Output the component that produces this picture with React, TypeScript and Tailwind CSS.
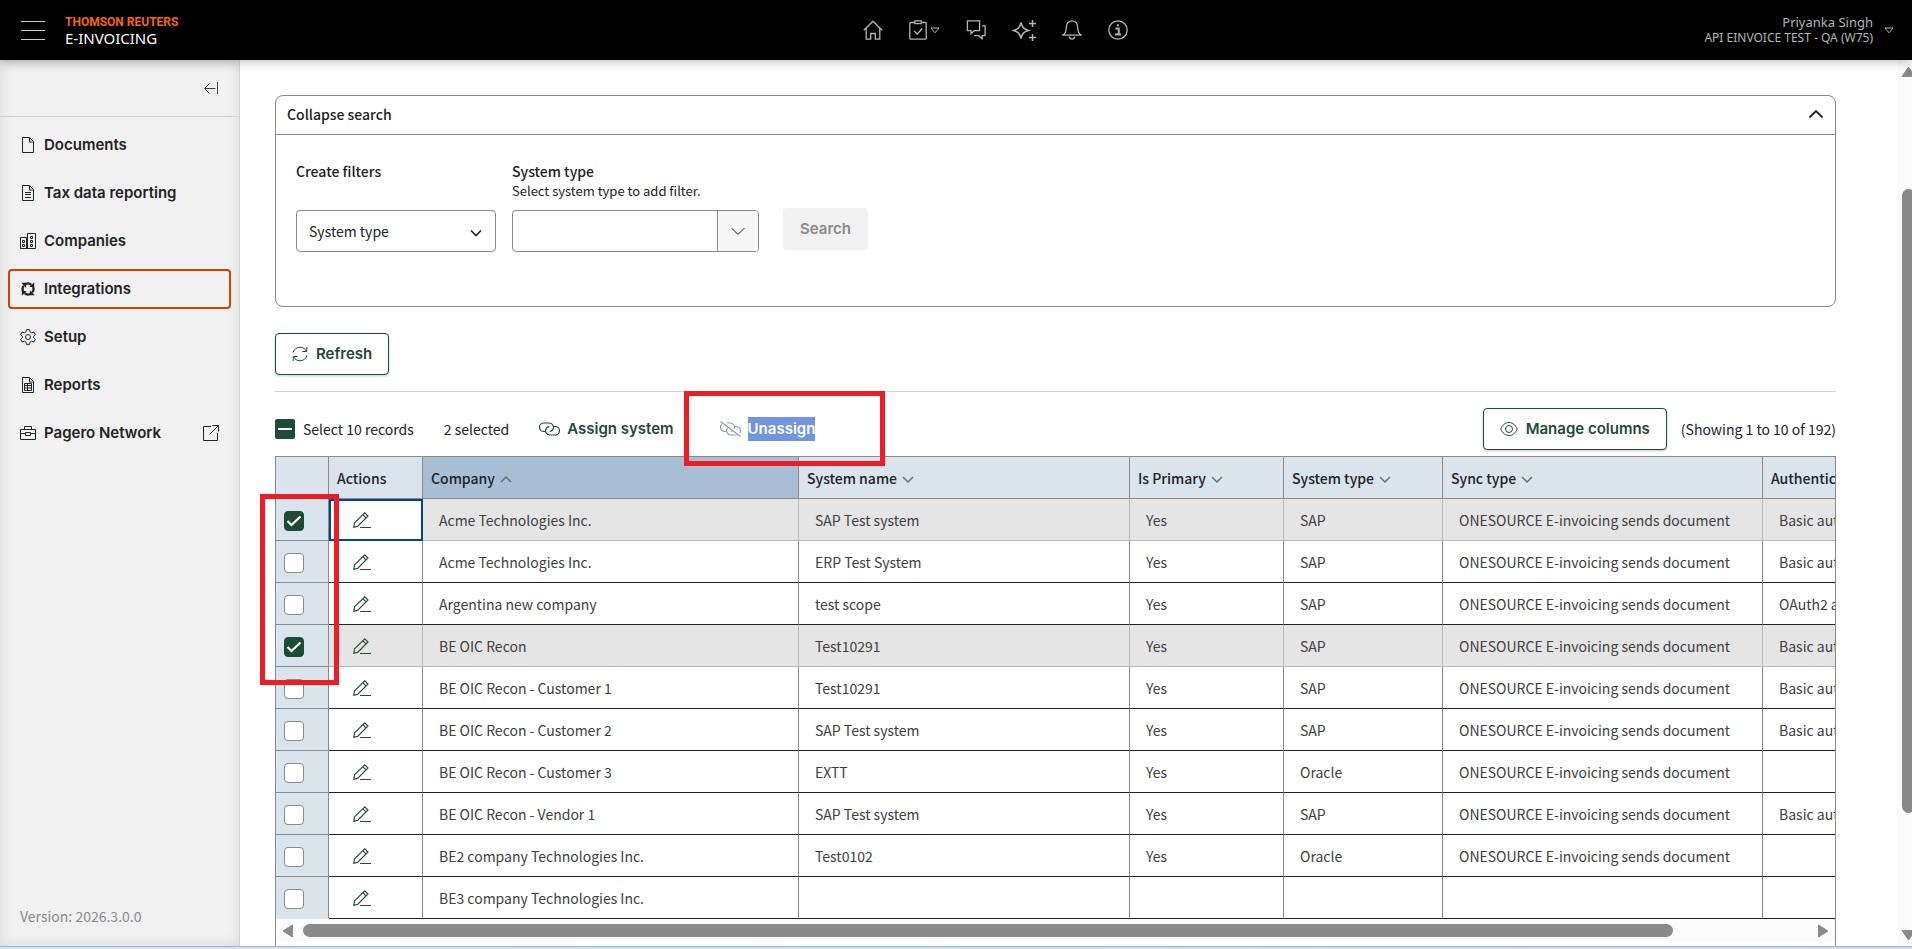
import type { ReactNode } from "react";
import { clsx } from "clsx";

type Row = {
  company: string;
  system: string;
  primary: string;
  type: string;
  sync: string;
  auth: string;
  selected?: boolean;
};

const SYNC = "ONESOURCE E-invoicing sends document";

const rows: Row[] = [
  { company: "Acme Technologies Inc.", system: "SAP Test system", primary: "Yes", type: "SAP", sync: SYNC, auth: "Basic authentication", selected: true },
  { company: "Acme Technologies Inc.", system: "ERP Test System", primary: "Yes", type: "SAP", sync: SYNC, auth: "Basic authentication" },
  { company: "Argentina new company", system: "test scope", primary: "Yes", type: "SAP", sync: SYNC, auth: "OAuth2 authentication" },
  { company: "BE OIC Recon", system: "Test10291", primary: "Yes", type: "SAP", sync: SYNC, auth: "Basic authentication", selected: true },
  { company: "BE OIC Recon - Customer 1", system: "Test10291", primary: "Yes", type: "SAP", sync: SYNC, auth: "Basic authentication" },
  { company: "BE OIC Recon - Customer 2", system: "SAP Test system", primary: "Yes", type: "SAP", sync: SYNC, auth: "Basic authentication" },
  { company: "BE OIC Recon - Customer 3", system: "EXTT", primary: "Yes", type: "Oracle", sync: SYNC, auth: "" },
  { company: "BE OIC Recon - Vendor 1", system: "SAP Test system", primary: "Yes", type: "SAP", sync: SYNC, auth: "Basic authentication" },
  { company: "BE2 company Technologies Inc.", system: "Test0102", primary: "Yes", type: "Oracle", sync: SYNC, auth: "" },
  { company: "BE3 company Technologies Inc.", system: "", primary: "", type: "", sync: "", auth: "" },
];

const columns = ["System name", "Is Primary", "System type", "Sync type", "Authentication type"];

function Icon({ size = 16, w, h, className, children }: { size?: number; w?: number; h?: number; className?: string; children: ReactNode }) {
  const width = w ?? size;
  const height = h ?? size;
  return (
    <svg
      width={width}
      height={height}
      viewBox={`0 0 ${width} ${height}`}
      fill="none"
      stroke="currentColor"
      strokeWidth="1"
      aria-hidden="true"
      className={clsx("shrink-0", className)}
    >
      {children}
    </svg>
  );
}

const DocumentIcon = () => (
  <Icon>
    <path d="M2.5.5h7l4 4v11h-11zM9.5.5v4.500h4" />
  </Icon>
);

const TaxIcon = () => (
  <Icon>
    <path d="M2.5.5h7l4 4v11h-11zM9.5.5v4.500h4M5 7.500h6M5 9.500h6M5 12.500h6" />
  </Icon>
);

const CompaniesIcon = () => (
  <Icon>
    <path d="M.5 15.500v-11h6v11zM.5 15.500h15v-15h-8v15M10.500 3.500h2v2h-2zM10.500 7.500h2v2h-2zM10.500 11.500h2v2h-2zM2.500 7.500h2v2h-2zM2.500 11.500h2v2h-2z" />
  </Icon>
);

const IntegrationsIcon = () => (
  <Icon>
    {[0, 90, 180, 270].map((angle) => (
      <g key={angle} transform={`rotate(${angle} 8 8)`}>
        <path strokeWidth="2.200" d="M5.800 2.900c2-.8 4-.5 5.600.9" />
        <path fill="currentColor" stroke="none" d="M14.200 1.200v4.900H9.300z" />
      </g>
    ))}
  </Icon>
);

const SetupIcon = () => (
  <Icon>
    <path d="M6.500.6h3l.5 2.300 1.500.9 2.300-.8 1.500 2.600L13.600 7.200v1.600l1.700 1.600-1.500 2.600-2.300-.8-1.500.9-.5 2.300h-3L6 13.100l-1.500-.9-2.300.8L.7 10.400l1.700-1.600V7.200L.7 5.600 2.200 3l2.300.8L6 2.900z" />
    <circle cx="8" cy="8" r="2.500" />
  </Icon>
);

const ReportsIcon = () => (
  <Icon>
    <path d="M2.500.5h7l4 4v11h-11zM9.500.5v4.500h4M4.500 6.500h7v7h-7zM4.500 8.500h7M4.500 11h7M7.500 6.500v7" />
  </Icon>
);

const NetworkIcon = () => (
  <Icon>
    <path d="M.5 4.500h15v10H.5zM4.500 4.500v-3h7v3M.5 8.500h5M10.500 8.500h5M5.500 7.500h5v3h-5z" />
  </Icon>
);

const ExternalIcon = () => (
  <Icon className="ml-auto">
    <path d="M8 1.500H.5v14h14V8M9.500.5h6v6M15.500.5l-9 9" />
  </Icon>
);

const nav = [
  { label: "Documents", icon: <DocumentIcon /> },
  { label: "Tax data reporting", icon: <TaxIcon /> },
  { label: "Companies", icon: <CompaniesIcon /> },
  { label: "Integrations", icon: <IntegrationsIcon />, active: true },
  { label: "Setup", icon: <SetupIcon /> },
  { label: "Reports", icon: <ReportsIcon /> },
  { label: "Pagero Network", icon: <NetworkIcon />, external: true },
];

const Caret = () => (
  <Icon w={10} h={7}>
    <path d="M1 1h8L5 5.800z" />
  </Icon>
);

function TopBar() {
  return (
    <header className="relative z-10 flex h-[60px] shrink-0 items-center bg-black pr-[18px] pl-[21px] font-['Noto_Sans',sans-serif] text-[#b4b4b4] shadow-[0_2px_10px_rgba(0,0,0,0.25)]">
      <button type="button" aria-label="Menu" className="flex w-6 flex-col gap-2">
        <span className="h-px w-full bg-[#d0d0d0]" />
        <span className="h-px w-full bg-[#d0d0d0]" />
        <span className="h-px w-full bg-[#d0d0d0]" />
      </button>
      <div className="ml-5 leading-4">
        <p className="font-['Roboto',sans-serif] text-xs leading-4 font-bold text-[#fa6400]">THOMSON REUTERS</p>
        <p className="text-[15px] leading-4 text-white">E-INVOICING</p>
      </div>
      <nav className="flex flex-1 items-center justify-center gap-[26px] pl-[108px]">
        <button type="button" aria-label="Home">
          <Icon size={20}>
            <path strokeWidth="1.300" d="M.8 10.200 10 1.200l9.200 9M3.200 8v11.200h4.500v-5.700h4.600v5.700h4.500V8" />
          </Icon>
        </button>
        <button type="button" aria-label="Tasks" className="flex items-center gap-[3px]">
          <Icon w={18} h={20}>
            <path strokeWidth="1.300" d="M5 2.500H1.600A.8.800 0 0 0 .8 3.300v15.100a.8.800 0 0 0 .8.800h14.800a.8.800 0 0 0 .8-.8V3.300a.8.800 0 0 0-.8-.8H13M5.800.9h6.400v2.700H5.800zM5.200 11l3 3 5-5.500" />
          </Icon>
          <Caret />
        </button>
        <button type="button" aria-label="Messages">
          <Icon size={20}>
            <path strokeWidth="1.300" d="M1.400.9h12.200v9.800H8.200L5 13.800v-3.100H1.400zM16 5.900h3.100v9.800h-3v3.200l-3.400-3.200H8.200" />
          </Icon>
        </button>
        <button type="button" aria-label="Assistant">
          <Icon w={24} h={21}>
            <path strokeWidth="1.500" d="M9 2.500c1.200 5 2.800 6.700 7.500 8-4.700 1.300-6.300 3-7.500 8-1.200-5-2.800-6.700-7.500-8 4.700-1.300 6.300-3 7.500-8zM20.500 0v7M17 3.500h7M20.500 14v7M17 17.500h7" />
          </Icon>
        </button>
        <button type="button" aria-label="Notifications">
          <Icon size={20}>
            <path strokeWidth="1.300" d="M.9 15.100c3.500-2.500 3.300-4.700 3.500-8C4.600 3.200 7 .9 10 .9s5.400 2.300 5.600 6.200c.2 3.300 0 5.500 3.500 8zM7.300 16.700c.2 1.600 1.300 2.400 2.700 2.400s2.500-.8 2.700-2.400" />
          </Icon>
        </button>
        <button type="button" aria-label="Information">
          <Icon size={20}>
            <circle cx="10" cy="10" r="9.200" strokeWidth="1.300" />
            <path strokeWidth="2" d="M7.500 8.600h3.200v5.600M7 14.400h6.200M9 5.200h2" />
          </Icon>
        </button>
      </nav>
      <button type="button" className="flex items-center gap-[11px] text-right">
        <span>
          <span className="block text-[13px] leading-4">Priyanka Singh</span>
          <span className="block text-xs leading-4">API EINVOICE TEST - QA (W75)</span>
        </span>
        <Caret />
      </button>
    </header>
  );
}

function Sidebar() {
  return (
    <aside className="flex w-60 shrink-0 flex-col border-r border-[#d2d2d2] bg-[#f1f1f1] shadow-[inset_0_0_14px_rgba(0,0,0,0.1)]">
      <div className="flex h-[57px] shrink-0 items-center justify-end border-b border-[#d2d2d2] pr-5">
        <button type="button" aria-label="Collapse menu" className="text-[#404040]">
          <Icon w={15} h={12}>
            <path d="M1 6.500h10.500M5.500 1.500l-5 5 5 5M13.500 0v12" />
          </Icon>
        </button>
      </div>
      <nav className="flex flex-col gap-2 px-2 pt-2 font-['Inter',sans-serif] text-[15px] font-semibold text-[#212223]">
        {nav.map((item) => (
          <a
            key={item.label}
            href="#"
            className={clsx("flex h-10 items-center gap-2 rounded-[4px] border-2 px-[10px]", item.active ? "border-[#d64000]" : "border-transparent")}
          >
            {item.icon}
            {item.label}
            {item.external && <ExternalIcon />}
          </a>
        ))}
      </nav>
      <p className="mt-auto px-5 pb-5 text-sm leading-5 text-[#8a8a8a]">Version: 2026.3.0.0</p>
    </aside>
  );
}

function SearchPanel() {
  return (
    <section className="rounded-lg border border-[#8a8a8a]">
      <button type="button" className="flex h-[39px] w-full items-center justify-between border-b border-[#8a8a8a] px-[11px] pb-[2px] font-medium">
        Collapse search
        <Icon w={16} h={10}>
          <path strokeWidth="1.800" d="M1.500 8.500 8 2l6.500 6.500" />
        </Icon>
      </button>
      <div className="flex items-end px-5 pt-[26px] pb-[54px]">
        <div className="flex w-[200px] flex-col justify-between self-stretch">
          <label htmlFor="filter" className="font-medium">
            Create filters
          </label>
          <div className="grid items-center">
            <select id="filter" className="col-start-1 row-start-1 h-[42px] appearance-none rounded-[4px] border border-[#8a8a8a] bg-white px-3">
              <option>System type</option>
            </select>
            <Icon w={12} h={8} className="pointer-events-none col-start-1 row-start-1 mt-1 mr-[14px] justify-self-end">
              <path strokeWidth="1.600" d="m1 1.500 5 5 5-5" />
            </Icon>
          </div>
        </div>
        <div className="ml-4 w-[247px]">
          <label htmlFor="system-type" className="block font-medium">
            System type
          </label>
          <p className="text-[13px] leading-5">Select system type to add filter.</p>
          <div className="mt-[9px] flex h-[42px] overflow-hidden rounded-[4px] border border-[#8a8a8a]">
            <input id="system-type" type="text" className="min-w-0 flex-1 px-3 outline-none" />
            <button type="button" aria-label="Show system types" className="flex w-[41px] items-center justify-center border-l border-[#8a8a8a] bg-[#f7f7f7]">
              <Icon w={14} h={9}>
                <path d="m.5 1 6.500 6.500L13.500 1" />
              </Icon>
            </button>
          </div>
        </div>
        <button type="button" disabled className="mb-[2px] ml-6 h-[42px] rounded-[4px] bg-[#f1f1f1] px-[17px] font-['Inter',sans-serif] text-[15px] font-semibold text-[#8a8a8a]">
          Search
        </button>
      </div>
    </section>
  );
}

function OutlineButton({ icon, children }: { icon: ReactNode; children: ReactNode }) {
  return (
    <button
      type="button"
      className="flex h-[42px] items-center gap-2 rounded-[4px] border border-[#1d4b34] bg-white px-4 font-['Inter',sans-serif] text-[15px] font-semibold text-[#1d4b34] shadow-[0_1px_3px_rgba(0,0,0,0.2)]"
    >
      {icon}
      {children}
    </button>
  );
}

const LinkPaths = () => (
  <path
    strokeWidth="1.200"
    d="M6 9.500H4.800a4.250 4.250 0 0 1 0-8.500h5.400a4.250 4.250 0 0 1 3.300 6.900c-.7.9-1.700 1.400-2.800 1.500M15 4.500h1.200a4.250 4.250 0 0 1 0 8.500h-5.400a4.250 4.250 0 0 1-3.300-6.900c.7-.9 1.700-1.400 2.800-1.500"
  />
);

function Toolbar() {
  return (
    <div className="mt-4 flex items-center">
      <label className="flex items-center gap-2">
        <span className="grid size-5 place-items-center">
          <input
            type="checkbox"
            ref={(el) => {
              if (el) el.indeterminate = true;
            }}
            className="col-start-1 row-start-1 size-5 appearance-none rounded-[2px] bg-[#1d4b34]"
          />
          <span className="pointer-events-none col-start-1 row-start-1 h-[2px] w-[14px] bg-white" />
        </span>
        Select 10 records
      </label>
      <span className="ml-[30px]">2 selected</span>
      <button type="button" className="ml-[30px] flex items-center gap-[7px] font-['Inter',sans-serif] text-[15px] font-semibold text-[#1d4b34]">
        <Icon w={21} h={14}>
          <LinkPaths />
        </Icon>
        Assign system
      </button>
      <div className="relative ml-[46px]">
        <button type="button" className="flex items-center gap-[7px] font-['Inter',sans-serif] text-[15px] font-semibold text-white">
          <Icon w={21} h={16} className="text-[#8ea599]">
            <g transform="translate(0 1)">
              <LinkPaths />
            </g>
            <path strokeWidth="3" className="stroke-white" d="m2 0 18.500 15" />
            <path strokeWidth="1.200" d="m.5.5 20 15" />
          </Icon>
          <span className="bg-[#7195e0] leading-6">Unassign</span>
        </button>
        <div className="pointer-events-none absolute -top-[26px] -left-9 z-10 h-[75px] w-[201px] border-5 border-[#ee1c24]" />
      </div>
      <div className="ml-auto flex items-center gap-[14px]">
        <OutlineButton
          icon={
            <Icon w={18} h={16}>
              <path d="M.7 8C2.500 4 5.300 1.500 9 1.500S15.500 4 17.300 8C15.500 12 12.700 14.500 9 14.500S2.500 12 .7 8z" />
              <circle cx="9" cy="8" r="3.500" />
            </Icon>
          }
        >
          Manage columns
        </OutlineButton>
        <span>(Showing 1 to 10 of 192)</span>
      </div>
    </div>
  );
}

function RowCheckbox({ checked, label }: { checked?: boolean; label: string }) {
  return (
    <span className="mt-[3px] grid size-5">
      <input
        type="checkbox"
        aria-label={label}
        defaultChecked={checked}
        className="col-start-1 row-start-1 size-5 appearance-none rounded-[4px] border border-[#8a8a8a] bg-white checked:border-[#1d4b34] checked:bg-[#1d4b34]"
      />
      {checked && (
        <Icon size={20} className="pointer-events-none col-start-1 row-start-1 text-white">
          <path strokeWidth="2.200" d="m3.500 10 4 4 9-8.500" />
        </Icon>
      )}
    </span>
  );
}

function SortIcon({ up }: { up?: boolean }) {
  return (
    <Icon w={12} h={7} className="ml-[5px] inline-block text-[#55796a]">
      <path strokeWidth="1.500" d={up ? "m1 6 5-5 5 5" : "m1 1 5 5 5-5"} />
    </Icon>
  );
}

function IntegrationsTable() {
  return (
    <div className="relative mt-[6px]">
      <div className="overflow-hidden border-x border-t border-[#8a8a8a]">
        <table className="w-[1700px] table-fixed border-separate border-spacing-0 text-left">
          <colgroup>
            <col className="w-[53px]" />
            <col className="w-[94px]" />
            <col className="w-[376px]" />
            <col className="w-[331px]" />
            <col className="w-[154px]" />
            <col className="w-[159px]" />
            <col className="w-[320px]" />
            <col className="w-[213px]" />
          </colgroup>
          <thead>
            <tr className="h-[42px] bg-[#dae4ec] [&>th]:border-r [&>th]:border-b [&>th]:border-[#8a8a8a] [&>th]:px-2 [&>th]:font-medium">
              <th aria-label="Selection" />
              <th>Actions</th>
              <th className="bg-[#a8bed5]">
                Company
                <SortIcon up />
              </th>
              {columns.map((c) => (
                <th key={c}>
                  {c}
                  <SortIcon />
                </th>
              ))}
            </tr>
          </thead>
          <tbody>
            {rows.map((row, i) => (
              <tr
                key={i}
                className={clsx(
                  "h-[42px] text-[#404040] [&>td]:border-r [&>td]:border-b",
                  row.selected ? "bg-[#e5e5e5] [&>td]:border-[#b9b9b9]" : "[&>td]:border-r-[#8a8a8a] [&>td]:border-b-[#212223]",
                )}
              >
                <td className={clsx("border-r-[#8a8a8a]! bg-[#dae4ec] px-2", i === rows.length - 1 ? "border-b-[#dae4ec]!" : "border-b-[#8a8a8a]!")}>
                  <RowCheckbox checked={row.selected} label={`Select ${row.company}`} />
                </td>
                <td className={clsx("pl-6", i === 0 && "bg-white outline-2 -outline-offset-2 outline-[#00478f]")}>
                  <button type="button" aria-label={`Edit ${row.company}`} className="block text-[#1d4b34]">
                    <Icon w={18} h={16}>
                      <path strokeWidth="1.100" d="M1.500 10.800 11.800.8l3.200 3.200L4.800 14.200l-4 1.200zM9.800 2.700l3.200 3.200M7 15.500h11" />
                    </Icon>
                  </button>
                </td>
                <td className="px-4">{row.company}</td>
                <td className="px-4">{row.system}</td>
                <td className="px-4">{row.primary}</td>
                <td className="px-4">{row.type}</td>
                <td className="px-4">{row.sync}</td>
                <td className="px-4">{row.auth}</td>
              </tr>
            ))}
          </tbody>
        </table>
        <div className="flex h-[23px] items-center gap-[10px] bg-[#fbfbfb] px-[6px] text-[#8a8a8a]">
          <Icon w={11} h={14}>
            <path fill="currentColor" strokeLinejoin="round" d="M10.500 1v12L1 7z" />
          </Icon>
          <div className="flex flex-1">
            <div className="h-[13px] w-[91%] rounded-full bg-[#8a8a8a]" />
          </div>
          <Icon w={11} h={14}>
            <path fill="currentColor" strokeLinejoin="round" d="M.5 1v12L10 7z" />
          </Icon>
        </div>
        <div className="h-4" />
      </div>
      <div className="pointer-events-none absolute top-[38px] -left-[15px] z-10 h-[191px] w-[79px] border-5 border-[#ee1c24]" />
    </div>
  );
}

// Track runs a few pixels past the right edge of the window
function PageScrollbar() {
  return (
    <div className="w-[15px] shrink-0 overflow-hidden bg-[#fbfbfb] text-[#8a8a8a]">
      <div className="flex h-full w-[22px] flex-col items-center pt-[6px] pb-[5px]">
        <Icon w={15} h={11}>
          <path fill="currentColor" strokeLinejoin="round" d="M7.500 1 14 10.500H1z" />
        </Icon>
        <div className="flex-[112]" />
        <div className="w-[13px] flex-[623] rounded-full bg-[#8a8a8a]" />
        <div className="flex-[117]" />
        <Icon w={15} h={11}>
          <path fill="currentColor" strokeLinejoin="round" d="M7.500 10 14 .5H1z" />
        </Icon>
      </div>
    </div>
  );
}

export default function App() {
  return (
    <div className="flex h-screen flex-col overflow-hidden bg-white font-['Noto_Sans_CJK_SC',sans-serif] text-sm text-[#212223]">
      <TopBar />
      <div className="flex min-h-0 flex-1">
        <Sidebar />
        <main className="min-w-0 flex-1 overflow-hidden pt-[35px] pr-[61px] pl-[35px]">
          <SearchPanel />
          <div className="mt-[26px] border-b border-[#d2d2d2] pb-4">
            <OutlineButton
              icon={
                <Icon>
                  <path d="M1 6.500C2 3.300 4.700 1.200 8 1.200c2.800 0 5.200 1.500 6.300 3.800M15 9.500c-1 3.200-3.700 5.300-7 5.300-2.800 0-5.200-1.500-6.300-3.800M14.800 1v4.500h-4.500M1.200 15v-4.500h4.500" />
                </Icon>
              }
            >
              Refresh
            </OutlineButton>
          </div>
          <Toolbar />
          <IntegrationsTable />
        </main>
        <PageScrollbar />
      </div>
      <div className="h-[3px] shrink-0 border-t border-[#a9b4ba] bg-linear-to-r from-[#c9e8f3] to-[#d0daee]" />
    </div>
  );
}
